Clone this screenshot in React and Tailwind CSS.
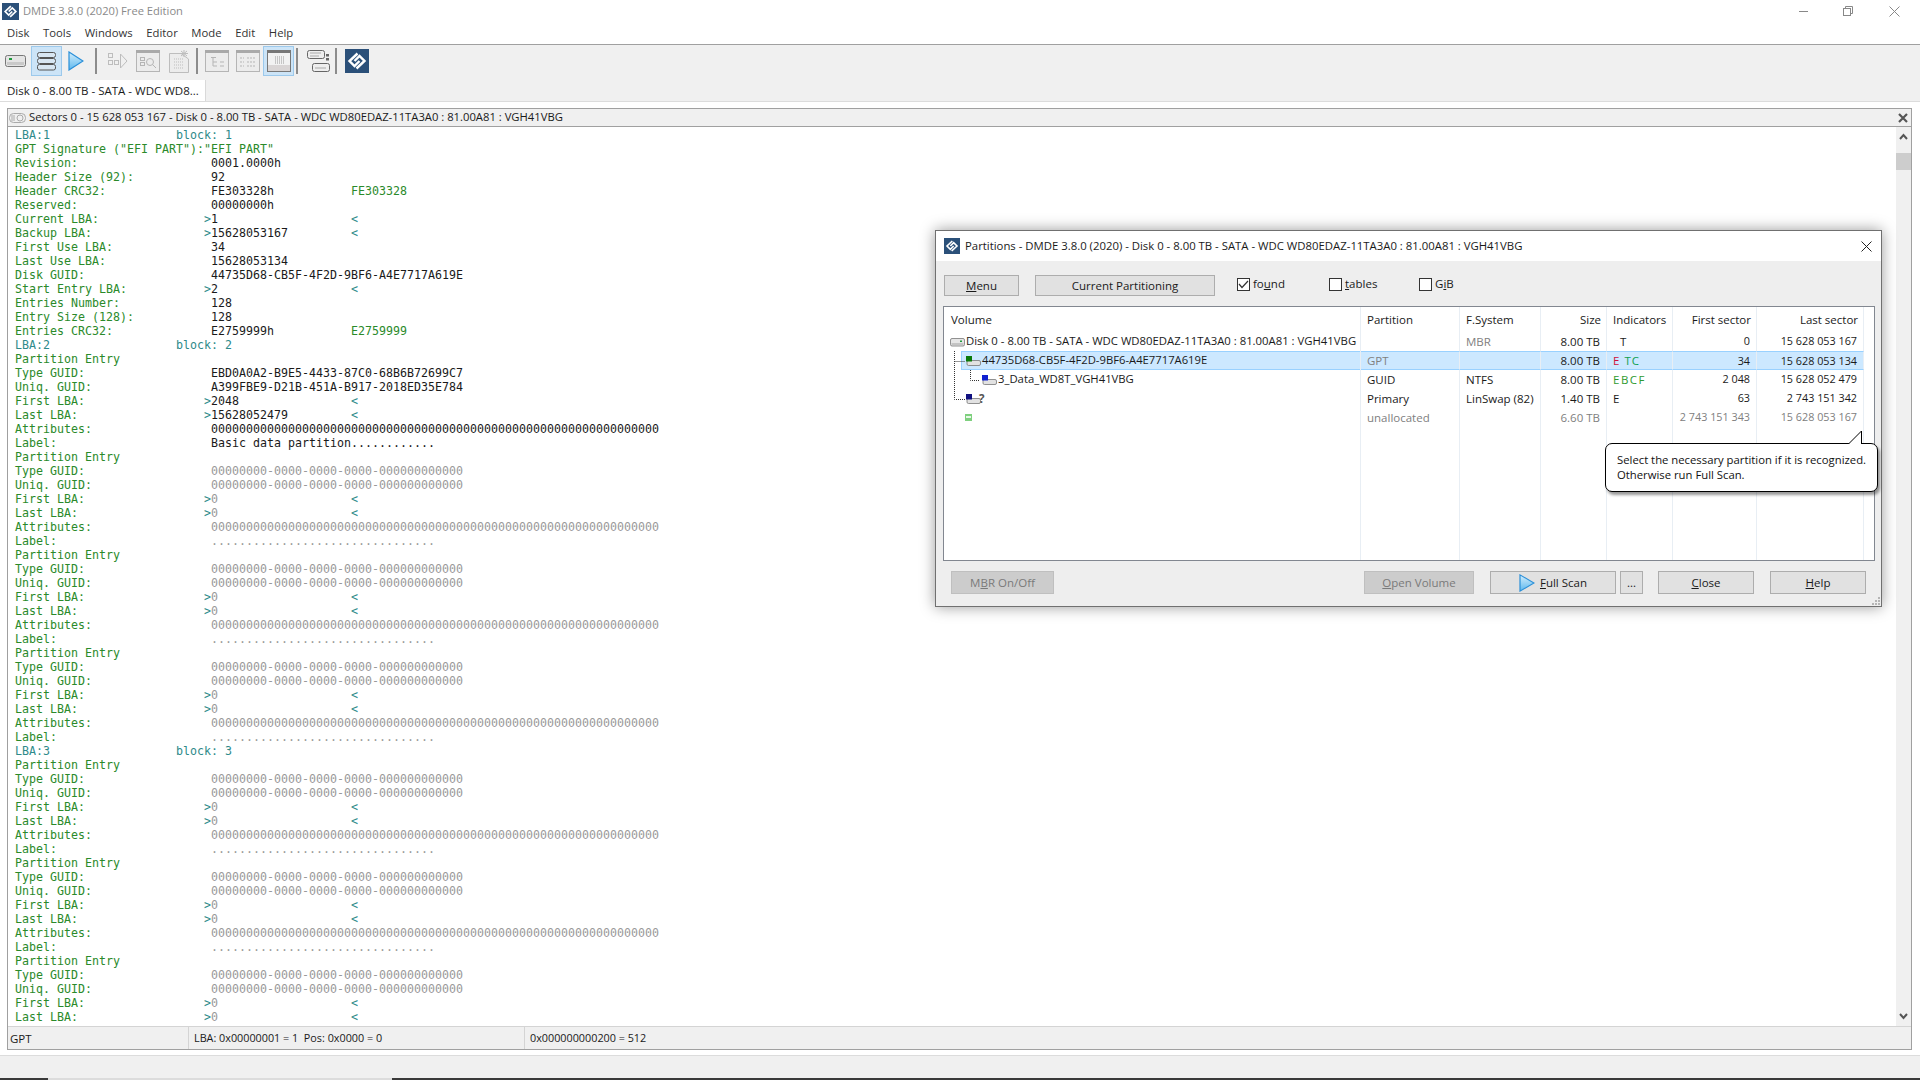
import React from 'react';

const GRID = 'grid grid-cols-[417px_99px_81px_66px_66px_84px_107px_1fr]';

const Logo = ({ size = 24 }) => (
  <svg width={size} height={size} viewBox="0 0 24 24">
    <rect width="24" height="24" fill="#2b5079" />
    <path d="M12.5 4.5 L4.5 12 L9.5 17 L14.5 12" fill="none" stroke="#fff" strokeWidth="2.4" />
    <path d="M11.5 19.5 L19.5 12 L14.5 7 L9.5 12" fill="none" stroke="#fff" strokeWidth="2.4" />
  </svg>
);

const Play = ({ w = 16, h = 20 }) => (
  <svg width={w} height={h} viewBox="0 0 16 20" preserveAspectRatio="none">
    <defs>
      <linearGradient id="playFill" x1="0" y1="0" x2="0" y2="1">
        <stop offset="0" stopColor="#d4eefc" />
        <stop offset="1" stopColor="#5db8ee" />
      </linearGradient>
    </defs>
    <path d="M1 1 L15 10 L1 19 Z" fill="url(#playFill)" stroke="#2a8fd8" strokeWidth="1.2" />
  </svg>
);

const Drive = () => (
  <svg width="21" height="12" viewBox="0 0 21 12">
    <rect x="0.5" y="0.5" width="20" height="11" rx="2" fill="#e4e4e4" stroke="#777" />
    <rect x="2" y="7" width="17" height="3" fill="#c9c9c9" />
    <rect x="4" y="3" width="3" height="2" fill="#1e9b3c" />
  </svg>
);

// small disk icon of the tree: no square for the whole disk, a coloured one for partitions
const TreeDrive = ({ color }) => (
  <svg width="15" height="10" viewBox="0 0 15 10">
    {color ? (
      <>
        <rect x="1" y="4.5" width="13.5" height="5" rx="1.5" fill="#e2e2e2" stroke="#777" strokeWidth="0.8" />
        <rect x="0" y="0" width="6" height="5.5" fill={color} />
      </>
    ) : (
      <>
        <rect x="0.5" y="1.5" width="14" height="7.5" rx="1.5" fill="#e6e6e6" stroke="#777" strokeWidth="0.8" />
        <rect x="1.5" y="6" width="12" height="2" fill="#c4c4c4" />
        <rect x="10" y="3.5" width="2" height="1.5" fill="#1e9b3c" />
      </>
    )}
  </svg>
);

const Stack = () => (
  <svg width="19" height="19" viewBox="0 0 19 19" fill="#d8e6f2" stroke="#555">
    <rect x="0.5" y="0.5" width="18" height="5" rx="2" />
    <rect x="0.5" y="6.5" width="18" height="5" rx="2" />
    <rect x="0.5" y="12.5" width="18" height="5.5" rx="2" />
  </svg>
);

const Sep = () => <div className="w-[2px] h-[26px] bg-[#8c8c8c]" />;

const Pane = ({ children }) => (
  <svg width="24" height="22" viewBox="0 0 24 22" fill="none" stroke="#b5b5b5">
    <rect x="0.5" y="0.5" width="23" height="21" fill="#ececec" />
    <rect x="0" y="0" width="24" height="3" fill="#a9a9a9" stroke="none" />
    {children}
  </svg>
);

const Toolbar = () => (
  <div className="h-[35px] shrink-0 flex items-center pb-[3px] bg-[#f0f0f0]">
    <div className="ml-[5px] flex"><Drive /></div>
    <div className="ml-[5px] w-[31px] h-[30px] flex items-center justify-center bg-[#cce4f7] border border-[#9cc9ec]"><Stack /></div>
    <div className="ml-[6px] flex"><Play /></div>
    <div className="ml-[11px]"><Sep /></div>
    <svg className="ml-[10px]" width="21" height="20" viewBox="0 0 21 20" fill="none" stroke="#bdbdbd">
      <rect x="1.5" y="2.5" width="4" height="4" /><rect x="1.5" y="9.5" width="4" height="4" /><rect x="7.5" y="9.5" width="4" height="4" />
      <path d="M13.5 3 L20 10 L13.5 17 Z" />
    </svg>
    <div className="ml-[8px] flex">
      <Pane>
        <rect x="4.5" y="7.5" width="4" height="3" /><rect x="4.5" y="12.5" width="4" height="3" />
        <circle cx="14" cy="12" r="3.5" /><path d="M16.5 14.5 L20 18" />
      </Pane>
    </div>
    <svg className="ml-[9px]" width="20" height="24" viewBox="0 0 20 24" fill="none" stroke="#bdbdbd">
      <path d="M0.5 4.5 H12 L19.5 10 V23.5 H0.5 Z" fill="#ececec" />
      <path d="M15 1 V8 M11 4.5 H19 M12 2 L18 7 M18 2 L12 7" />
      <path d="M5 10 H14 M5 13 H14 M5 16 H14 M5 19 H14" strokeDasharray="1 1" />
    </svg>
    <div className="ml-[7px]"><Sep /></div>
    <div className="ml-[7px] flex">
      <Pane>
        <path d="M6 7.5 H11 M8 8 V16 M8 12 H12 M8 16 H12 M15 12 H19 M15 16 H19" />
      </Pane>
    </div>
    <div className="ml-[7px] flex">
      <Pane>
        <path d="M4 8 H8 M4 12 H8 M4 16 H8 M11 8 H20 M11 12 H20 M11 16 H20" strokeDasharray="2 1" />
      </Pane>
    </div>
    <div className="ml-[3px] w-[31px] h-[30px] flex items-center justify-center bg-[#cce4f7] border border-[#9cc9ec]">
      <svg width="24" height="22" viewBox="0 0 24 22" fill="none">
        <rect x="0.5" y="0.5" width="23" height="21" fill="#f2f2f2" stroke="#777" />
        <rect x="0" y="0" width="24" height="3" fill="#777" />
        <rect x="1" y="15" width="22" height="6" fill="#d9d5d5" />
        <path d="M8 7 H17 M8 9 H17 M8 11 H17 M8 13 H17" stroke="#999" strokeDasharray="1 1" />
      </svg>
    </div>
    <div className="ml-[2px]"><Sep /></div>
    <svg className="ml-[9px]" width="23" height="24" viewBox="0 0 23 24" fill="none" stroke="#666">
      <rect x="0.5" y="1.5" width="17" height="8" rx="2" fill="#eee" />
      <path d="M3 4 H14 M3 7 H12" stroke="#aaa" />
      <rect x="5.5" y="14.5" width="17" height="8" rx="2" fill="#eee" />
      <path d="M8 19 H19" stroke="#aaa" />
      <rect x="19" y="5" width="3" height="2.5" fill="#666" stroke="none" /><rect x="19" y="9" width="3" height="2.5" fill="#666" stroke="none" />
    </svg>
    <div className="ml-[5px]"><Sep /></div>
    <div className="ml-[8px] flex"><Logo /></div>
  </div>
);

// builds one line of the sector view out of [text, colour class] pieces
const GREEN = 'text-[#2a8a2a]';
const TEAL = 'text-[#2e8a8a]';
const BLACK = 'text-[#1a1a1a]';
const GRAY = 'text-[#9a9a9a]';

const pad = (s, n) => s.padEnd(n, ' ');
const field = (label, value, extra) => [
  [pad(label, 28), GREEN],
  [value, BLACK],
  ...(extra ? [[' '.repeat(Math.max(0, 20 - value.length)), BLACK], [extra, GREEN]] : []),
];
const link = (label, value, cls = BLACK) => [
  [pad(label, 27), GREEN],
  ['>', TEAL],
  [pad(value, 20), cls],
  ['<', TEAL],
];
const head = (lba) => [[pad(`LBA:${lba}`, 23), TEAL], [`block: ${lba}`, TEAL]];

const ZEROS = '0'.repeat(64);
const entry = (type, uniq, first, last, label) => {
  const cls = type ? BLACK : GRAY;
  const nil = '00000000-0000-0000-0000-000000000000';
  return [
    [['Partition Entry', GREEN]],
    [[pad('Type GUID:', 28), GREEN], [type || nil, cls]],
    [[pad('Uniq. GUID:', 28), GREEN], [uniq || nil, cls]],
    link('First LBA:', first, cls),
    link('Last LBA:', last, cls),
    [[pad('Attributes:', 28), GREEN], [ZEROS, cls]],
    [[pad('Label:', 28), GREEN], [label, cls]],
  ];
};
const emptyEntry = () => entry(null, null, '0', '0', '.'.repeat(32));

const LINES = [
  head(1),
  [['GPT Signature ("EFI PART"):"EFI PART"', GREEN]],
  field('Revision:', '0001.0000h'),
  field('Header Size (92):', '92'),
  field('Header CRC32:', 'FE303328h', 'FE303328'),
  field('Reserved:', '00000000h'),
  link('Current LBA:', '1'),
  link('Backup LBA:', '15628053167'),
  field('First Use LBA:', '34'),
  field('Last Use LBA:', '15628053134'),
  field('Disk GUID:', '44735D68-CB5F-4F2D-9BF6-A4E7717A619E'),
  link('Start Entry LBA:', '2'),
  field('Entries Number:', '128'),
  field('Entry Size (128):', '128'),
  field('Entries CRC32:', 'E2759999h', 'E2759999'),
  head(2),
  ...entry('EBD0A0A2-B9E5-4433-87C0-68B6B72699C7', 'A399FBE9-D21B-451A-B917-2018ED35E784', '2048', '15628052479', 'Basic data partition............'),
  ...emptyEntry(),
  ...emptyEntry(),
  ...emptyEntry(),
  head(3),
  ...emptyEntry(),
  ...emptyEntry(),
  ...emptyEntry().slice(0, 5),
];

const SectorPanel = () => (
  <div className="flex-1 bg-white border-t border-[#dcdcdc] pt-[6px] pb-[5px] pl-[7px] pr-[8px] flex min-h-0">
    <div className="flex-1 flex flex-col border border-[#a0a0a0] min-w-0">
      <div className="h-[18px] flex items-center bg-[#f0f0f0] border-b border-[#a0a0a0] pl-[1px] pr-[3px]">
        <svg width="18" height="12" viewBox="0 0 18 12" fill="none" stroke="#aaa">
          <rect x="0.5" y="1.5" width="16" height="9" rx="4" />
          <circle cx="11" cy="6" r="3" />
          <path d="M3 3 V9 M5 3 V9" />
        </svg>
        <span className="ml-[2px] whitespace-nowrap text-[11.25px]">Sectors 0 - 15 628 053 167 - Disk 0 - 8.00 TB - SATA - WDC WD80EDAZ-11TA3A0 : 81.00A81 : VGH41VBG</span>
        <svg className="ml-auto" width="10" height="10" viewBox="0 0 10 10" stroke="#555" strokeWidth="2.2">
          <path d="M1 1 L9 9 M9 1 L1 9" />
        </svg>
      </div>
      <div className="flex-1 flex min-h-0">
        <div className="flex-1 pl-[7px] pt-[1px] overflow-hidden font-['DejaVu_Sans_Mono',monospace] text-[11.63px] leading-[14px] whitespace-pre">
          {LINES.map((line, i) => (
            <div key={i} className="h-[14px]">
              {line.map(([text, cls], j) => (
                <span key={j} className={cls}>{text}</span>
              ))}
            </div>
          ))}
        </div>
        <div className="w-[15px] bg-[#f0f0f0] flex flex-col items-center">
          <svg className="mt-[6px]" width="9" height="7" viewBox="0 0 9 7" fill="none" stroke="#555" strokeWidth="2">
            <path d="M1 6 L4.5 2 L8 6" />
          </svg>
          <div className="mt-[13px] w-full h-[17px] bg-[#cdcdcd]" />
          <div className="flex-1" />
          <svg className="mb-[6px]" width="9" height="7" viewBox="0 0 9 7" fill="none" stroke="#555" strokeWidth="2">
            <path d="M1 1 L4.5 5 L8 1" />
          </svg>
        </div>
      </div>
      <div className="h-[23px] flex items-center bg-[#f0f0f0] border-t border-[#d4d4d4] text-[10.8px]">
        <div className="w-[181px] h-full pl-[2px] pt-[1px] flex items-center border-r border-[#d4d4d4] text-[11.5px]">GPT</div>
        <div className="w-[336px] h-full pl-[5px] pt-[1px] flex items-center border-r border-[#d4d4d4]">LBA: 0x00000001 = 1&nbsp;&nbsp;Pos: 0x0000 = 0</div>
        <div className="pl-[5px] pt-[1px]">0x000000000200 = 512</div>
      </div>
    </div>
  </div>
);

const Btn = ({ className = '', disabled, children }) => (
  <div className={`h-full flex items-center justify-center border ${disabled ? 'bg-[#cccccc] border-[#bfbfbf] text-[#7a7a7a]' : 'bg-[#e1e1e1] border-[#adadad] text-[#1a1a1a]'} ${className}`}>
    {children}
  </div>
);

const Check = ({ checked, className, children }) => (
  <div className={`flex items-center -mt-[2px] ${className}`}>
    <div className="w-[13px] h-[13px] bg-white border border-[#333] flex items-center justify-center">
      {checked && (
        <svg width="11" height="9" viewBox="0 0 11 9" fill="none" stroke="#333" strokeWidth="1.2">
          <path d="M1 4 L4 7.5 L10 1" />
        </svg>
      )}
    </div>
    <span className="ml-[3px] -mt-[1px]">{children}</span>
  </div>
);

const Cell = ({ className = '', children, selected }) => (
  <div className={`flex items-center pl-[6px] border-r border-[#e8eef4] whitespace-nowrap ${selected ? 'bg-[#cce8ff] border-y border-y-[#99d1ff]' : ''} ${className}`}>
    {children}
  </div>
);

const HEADERS = [
  ['Partition', ''],
  ['F.System', ''],
  ['Size', 'justify-end pr-[5px]'],
  ['Indicators', ''],
  ['First sector', 'justify-end pr-[5px]'],
  ['Last sector', 'justify-end pr-[5px]'],
];

const MUTED = 'text-[#808080]';

const ROWS = [
  { vol: 'Disk 0 - 8.00 TB - SATA - WDC WD80EDAZ-11TA3A0 : 81.00A81 : VGH41VBG', textCls: 'text-[11.33px]', indent: 1, icon: <TreeDrive />, fs: 'MBR', fsCls: MUTED, size: '8.00 TB', ind: <span className="ml-[7px]">T</span>, first: '0', last: '15 628 053 167' },
  { vol: '44735D68-CB5F-4F2D-9BF6-A4E7717A619E', textCls: 'text-[11.25px]', indent: 17, icon: <TreeDrive color="#0a7a0a" />, part: 'GPT', partCls: MUTED, size: '8.00 TB', ind: <span className="tracking-[1px]"><span className="text-[#d0103a]">E </span><span className="text-[#10a050]">TC</span></span>, first: '34', last: '15 628 053 134', selected: true },
  { vol: '3_Data_WD8T_VGH41VBG', textCls: 'text-[11.3px]', indent: 33, icon: <TreeDrive color="#1020d0" />, part: 'GUID', fs: 'NTFS', size: '8.00 TB', ind: <span className="text-[#2e9a2e] tracking-[1.5px]">EBCF</span>, first: '2 048', last: '15 628 052 479' },
  { vol: '?', indent: 17, icon: <TreeDrive color="#101080" />, textCls: '-ml-[3px] text-[#555] font-bold', part: 'Primary', fs: 'LinSwap (82)', size: '1.40 TB', ind: 'E', first: '63', last: '2 743 151 342' },
  { vol: '', indent: 16, icon: (
      <svg width="7" height="7" viewBox="0 0 7 7"><rect width="7" height="7" fill="#7fd07f" /><rect x="1" y="2" width="5" height="2" fill="#e8f8e8" /></svg>
    ), part: 'unallocated', partCls: MUTED, size: '6.60 TB', sizeCls: MUTED, first: '2 743 151 343', firstCls: MUTED, last: '15 628 053 167', lastCls: MUTED },
];

const Row = ({ r }) => (
  <div className={`${GRID} h-[19px]`}>
    <div className="flex items-center border-r border-[#e8eef4] whitespace-nowrap">
      {r.selected && <div className="w-[17px] shrink-0" />}
      <div className={`flex-1 h-full flex items-center ${r.selected ? 'bg-[#cce8ff] border-y border-l border-[#99d1ff]' : ''}`} style={{ paddingLeft: r.selected ? r.indent - 17 + 4 : r.indent + 5 }}>
        <span className="w-[16px] shrink-0 flex items-center">{r.icon}</span>
        <span className={r.textCls}>{r.vol}</span>
      </div>
    </div>
    <Cell selected={r.selected} className={r.partCls}>{r.part}</Cell>
    <Cell selected={r.selected} className={r.fsCls}>{r.fs}</Cell>
    <Cell selected={r.selected} className={`justify-end pr-[6px] ${r.sizeCls || ''}`}>{r.size}</Cell>
    <Cell selected={r.selected}>{r.ind}</Cell>
    <Cell selected={r.selected} className={`justify-end pr-[6px] text-[10.8px] ${r.firstCls || ''}`}>{r.first}</Cell>
    <Cell selected={r.selected} className={`justify-end pr-[6px] text-[10.8px] ${r.lastCls || ''}`}>{r.last}</Cell>
    <div />
  </div>
);

const PartitionsDialog = () => (
  <div className="absolute left-[935px] top-[230px] w-[947px] h-[377px] flex flex-col border border-[#707070] bg-[#eeeeee] shadow-[0_0_14px_rgba(0,0,0,0.4)]">
    <div className="h-[30px] shrink-0 bg-white flex items-center pl-[8px] pr-[9px]">
      <Logo size={16} />
      <span className="ml-[5px] whitespace-nowrap text-[11.35px]">Partitions - DMDE 3.8.0 (2020) - Disk 0 - 8.00 TB - SATA - WDC WD80EDAZ-11TA3A0 : 81.00A81 : VGH41VBG</span>
      <svg className="ml-auto" width="11" height="11" viewBox="0 0 11 11" stroke="#222" strokeWidth="1">
        <path d="M0.5 0.5 L10.5 10.5 M10.5 0.5 L0.5 10.5" />
      </svg>
    </div>
    <div className="h-[21px] mt-[14px] ml-[8px] flex items-center shrink-0">
      <Btn className="w-[75px]"><span><u>M</u>enu</span></Btn>
      <Btn className="w-[180px] ml-[16px]">Current Partitioning</Btn>
      <Check checked className="w-[92px] ml-[22px]"><span>fo<u>u</u>nd</span></Check>
      <Check className="w-[90px]"><span><u>t</u>ables</span></Check>
      <Check className="w-[60px]"><span>G<u>i</u>B</span></Check>
    </div>
    <div className="relative w-[932px] h-[255px] mt-[10px] ml-[7px] shrink-0 flex flex-col bg-white border border-[#828790]">
      <div className={`${GRID} h-[25px]`}>
        <Cell className="!pl-[7px]">Volume</Cell>
        {HEADERS.map(([label, cls]) => (
          <Cell key={label} className={cls}>{label}</Cell>
        ))}
        <div />
      </div>
      {ROWS.map((r, i) => (
        <Row key={i} r={r} />
      ))}
      <div className={`${GRID} flex-1`}>
        {[0, 1, 2, 3, 4, 5, 6].map((i) => (
          <div key={i} className="border-r border-[#e8eef4]" />
        ))}
        <div />
      </div>
      <svg className="absolute left-[10px] top-[44px]" width="40" height="50" viewBox="0 0 40 50" fill="none" stroke="#333" strokeDasharray="1 1">
        <path d="M0.5 0 V48.5 H11 M0.5 10.5 H11 M16.5 19 V29.5 H26" />
      </svg>
      <div className="absolute left-[661px] top-[136px] w-[273px] h-[49px] bg-white border border-black rounded-[7px] shadow-[2px_3px_3px_rgba(0,0,0,0.4)] pl-[11px] pt-[8px] leading-[15px] text-[11.3px] text-[#111] whitespace-nowrap">
        Select the necessary partition if it is recognized.<br />Otherwise run Full Scan.
        <svg className="absolute left-[242px] -top-[14px]" width="16" height="15" viewBox="0 0 16 15">
          <path d="M0.5 14 L13.5 1 V14" fill="#fff" stroke="#000" />
          <rect x="1" y="14" width="12" height="1.5" fill="#fff" />
        </svg>
      </div>
    </div>
    <div className="h-[23px] mt-[10px] ml-[15px] flex shrink-0">
      <Btn disabled className="w-[103px]"><span>M<u>B</u>R On/Off</span></Btn>
      <Btn disabled className="w-[110px] ml-[310px]"><span><u>O</u>pen Volume</span></Btn>
      <Btn className="w-[126px] ml-[16px]">
        <span className="mr-[5px] flex"><Play w={16} h={18} /></span>
        <span><u>F</u>ull Scan</span>
      </Btn>
      <Btn className="w-[23px] ml-[4px]">...</Btn>
      <Btn className="w-[96px] ml-[15px]"><span><u>C</u>lose</span></Btn>
      <Btn className="w-[96px] ml-[16px]"><span><u>H</u>elp</span></Btn>
    </div>
    <svg className="absolute right-[1px] bottom-[1px]" width="8" height="8" viewBox="0 0 8 8" fill="#b5b5b5">
      <rect x="6" y="0" width="2" height="2" /><rect x="3" y="3" width="2" height="2" /><rect x="6" y="3" width="2" height="2" />
      <rect x="0" y="6" width="2" height="2" /><rect x="3" y="6" width="2" height="2" /><rect x="6" y="6" width="2" height="2" />
    </svg>
  </div>
);

const App = () => (
  <div className="relative w-[1920px] h-[1080px] overflow-hidden flex flex-col bg-[#f0f0f0] font-['Open_Sans',sans-serif] text-[11.5px] text-[#1a1a1a]">
    <div className="h-[22px] bg-white flex items-center shrink-0">
      <div className="ml-[2px] flex"><Logo size={17} /></div>
      <span className="ml-[4px] text-[#8a8a8a] text-[11.15px]">DMDE 3.8.0 (2020) Free Edition</span>
      <div className="ml-auto flex items-center">
        <div className="w-[9px] h-[1px] bg-[#888] mr-[35px]" />
        <svg className="mr-[36px]" width="10" height="10" viewBox="0 0 10 10" fill="none" stroke="#888">
          <path d="M2.5 2.5 V0.5 H9.5 V7.5 H7.5" /><rect x="0.5" y="2.5" width="7" height="7" />
        </svg>
        <svg className="mr-[20px]" width="11" height="11" viewBox="0 0 11 11" stroke="#888">
          <path d="M0.5 0.5 L10.5 10.5 M10.5 0.5 L0.5 10.5" />
        </svg>
      </div>
    </div>
    <div className="h-[21px] pt-[1px] bg-white flex items-center shrink-0 pl-[7px] gap-x-[13.6px] text-[11.3px] text-[#333] border-b border-[#a0a0a0] box-content">
      {['Disk', 'Tools', 'Windows', 'Editor', 'Mode', 'Edit', 'Help'].map((m) => (
        <span key={m}>{m}</span>
      ))}
    </div>
    <Toolbar />
    <div className="h-[21px] flex shrink-0">
      <div className="w-[206px] bg-white border-r border-[#d9d9d9] pl-[7px] flex items-center">Disk 0 - 8.00 TB - SATA - WDC WD8...</div>
    </div>
    <SectorPanel />
    <div className="h-[25px] shrink-0 border-t border-[#dcdcdc] bg-[#f0f0f0] flex items-end">
      <div className="w-[48px] h-[2px] bg-[#3a3a3a]" />
      <div className="w-[344px] h-[2px] bg-[#dcdcdc]" />
      <div className="flex-1 h-[2px] bg-[#3a3a3a]" />
    </div>
    <PartitionsDialog />
  </div>
);

export default App;
